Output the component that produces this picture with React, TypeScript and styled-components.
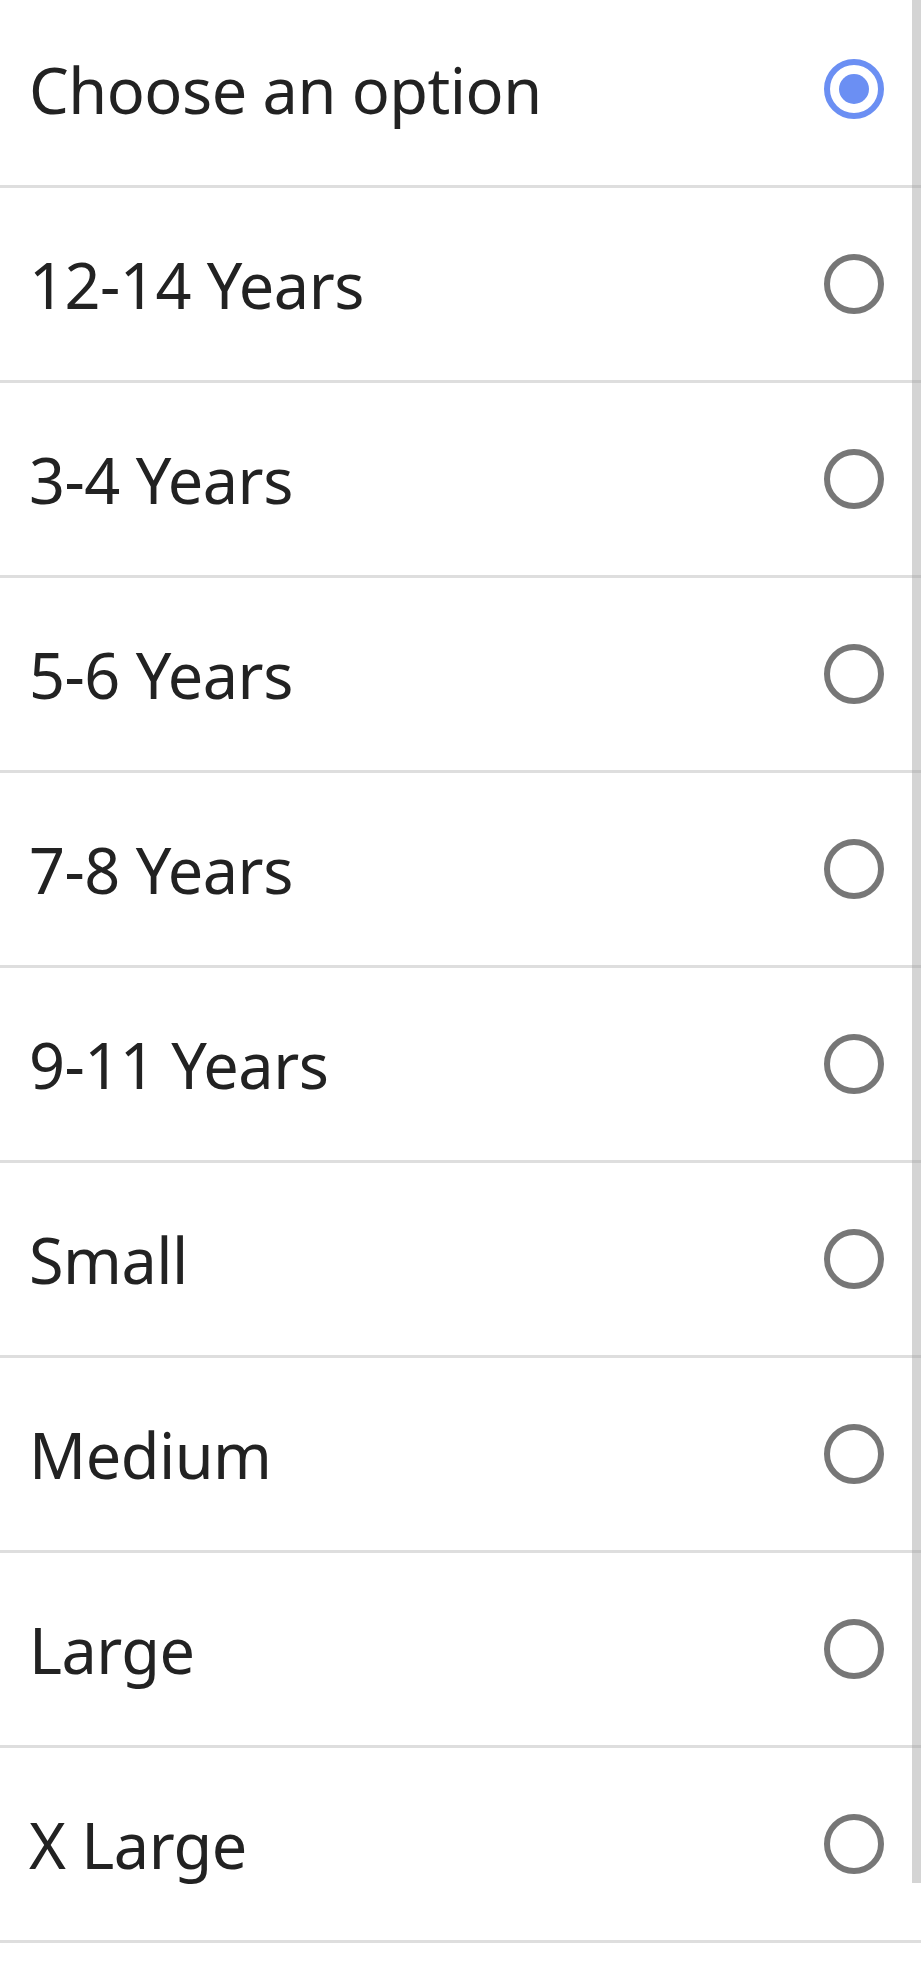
import styled, { createGlobalStyle } from 'styled-components'

const GlobalStyle = createGlobalStyle`
  html, body {
    margin: 0;
    padding: 0;
    background: #ffffff;
  }
  body {
    font-family: 'Noto Sans', Roboto, sans-serif;
  }
`

const Sheet = styled.div`
  position: relative;
  width: 921px;
  height: 1985px;
  overflow: hidden;
  background: #ffffff;
`

const List = styled.ul`
  list-style: none;
  margin: -7px 0 0 0;
  padding: 0;
`

const Row = styled.li`
  display: flex;
  align-items: center;
  justify-content: space-between;
  height: 192px;
  padding: 0 37px 0 29px;
  border-bottom: 3px solid #dedede;
`

const Label = styled.span`
  font-size: 63px;
  color: #222222;
  letter-spacing: -0.5px;
  line-height: 1;
`

const Radio = styled.span<{ checked?: boolean }>`
  box-sizing: border-box;
  display: flex;
  align-items: center;
  justify-content: center;
  width: 60px;
  height: 60px;
  border-radius: 50%;
  border: 6px solid ${({ checked }) => (checked ? '#6b8ff3' : '#777777')};
`

const Dot = styled.span`
  width: 30px;
  height: 30px;
  border-radius: 50%;
  background: #6b8ff3;
`

const ScrollThumb = styled.div`
  position: absolute;
  top: 0;
  right: 0;
  width: 9px;
  height: 1883px;
  background: rgba(160, 160, 160, 0.45);
`

const options = [
  'Choose an option',
  '12-14 Years',
  '3-4 Years',
  '5-6 Years',
  '7-8 Years',
  '9-11 Years',
  'Small',
  'Medium',
  'Large',
  'X Large',
]

const App = () => {
  const selected = 0
  return (
    <Sheet>
      <GlobalStyle />
      <List>
        {options.map((option, i) => (
          <Row key={option}>
            <Label>{option}</Label>
            <Radio checked={i === selected}>{i === selected && <Dot />}</Radio>
          </Row>
        ))}
      </List>
      <ScrollThumb />
    </Sheet>
  )
}

export default App
